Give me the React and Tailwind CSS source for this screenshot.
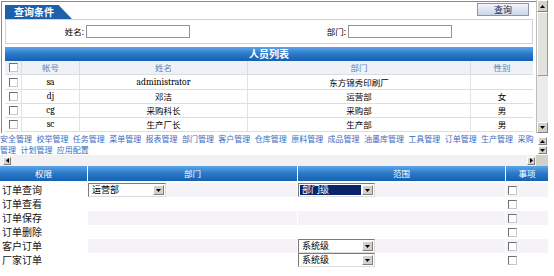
import React from "react";

function Tri({ dir = "down" }) {
  const horiz = dir === "left" || dir === "right";
  const w = horiz ? 3 : 5;
  const h = horiz ? 5 : 3;
  const pts = {
    down: "0,0 5,0 2.5,3",
    up: "0,3 5,3 2.5,0",
    left: "3,0 3,5 0,2.5",
    right: "0,0 0,5 3,2.5",
  }[dir];
  return (
    <svg width={w} height={h} viewBox={`0 0 ${w} ${h}`}>
      <polygon points={pts} fill="#000" />
    </svg>
  );
}

function Btn({ dir, className }) {
  return (
    <div
      className={`flex items-center justify-center bg-[#d4d0c8] border border-t-white border-l-white border-r-[#808080] border-b-[#808080] ${className}`}
    >
      <Tri dir={dir} />
    </div>
  );
}

function Check() {
  return (
    <div className="w-[9px] h-[9px] bg-white border border-t-[#6f6f6f] border-l-[#6f6f6f] border-r-[#c8c8c8] border-b-[#c8c8c8]" />
  );
}

function Select({ text, w, selected }) {
  return (
    <div
      className={`flex h-[14px] bg-white border border-t-[#7a7a7a] border-l-[#7a7a7a] border-r-[#dcdcdc] border-b-[#dcdcdc] ${w}`}
    >
      <div className="flex-1 p-[1px] flex">
        <div
          className={`flex-1 text-[9px] leading-[10px] pl-[2px] ${
            selected ? "bg-[#0a246a] text-white" : "text-black"
          }`}
        >
          {text}
        </div>
      </div>
      <Btn dir="down" className="w-[11px] h-[10px] my-[1px] mr-[1px]" />
    </div>
  );
}

const menu = [
  "安全管理",
  "校举管理",
  "任务管理",
  "菜单管理",
  "报表管理",
  "部门管理",
  "客户管理",
  "仓库管理",
  "原料管理",
  "成品管理",
  "油墨库管理",
  "工具管理",
  "订单管理",
  "生产管理",
  "采购管理",
  "计划管理",
  "应用配置",
];

const people = [
  ["sa", "administrator", "东方锦秀印刷厂", ""],
  ["dj", "邓洁", "运营部", "女"],
  ["cg", "采购科长", "采购部", "男"],
  ["sc", "生产厂长", "生产部", "男"],
];

const perms = [
  { name: "订单查询", dept: "运营部", scope: "部门级", sel: true },
  { name: "订单查看" },
  { name: "订单保存" },
  { name: "订单删除" },
  { name: "客户订单", scope: "系统级" },
  { name: "厂家订单", scope: "系统级" },
];

const isLatin = (s) => /^[\x00-\x7f]*$/.test(s);

export default function App() {
  return (
    <div className="w-[554px] h-[276px] bg-white overflow-hidden font-['Noto_Sans_CJK_SC','Noto_Sans',sans-serif] text-black">
      {/* top frame */}
      <div className="flex h-[133px]">
        <div className="mt-[1px] ml-[1px] w-[535px] h-[132px] border-l border-t border-[#8a8a8a] overflow-hidden">
          <div className="flex h-[17px] items-start">
            <div className="ml-[3px] mt-[3px] h-[14px] w-[67px] bg-[#1d5fa9] text-white font-bold text-[10px] leading-[14px] pl-[9px] [clip-path:polygon(0_0,80%_0,100%_100%,0_100%)]">
              查询条件
            </div>
            <div className="flex-1" />
            <div className="mt-[1px] mr-[7px] h-[13px] w-[52px] bg-gradient-to-b from-[#f2f5fb] to-[#c9d5e8] border border-[#8797b0] text-[9px] leading-[11px] text-center text-[#1c2f55]">
              查询
            </div>
          </div>
          <div className="ml-[3px] w-[528px] h-[25px] border border-[#c9d2dd] flex items-center text-[8.5px]">
            <div className="w-[78px] text-right">姓名:</div>
            <div className="ml-[2px] w-[104px] h-[13px] bg-white border border-[#8e959e]" />
            <div className="w-[156px] text-right">部门:</div>
            <div className="ml-[2px] w-[104px] h-[13px] bg-white border border-[#8e959e]" />
          </div>
          <div className="ml-[3px] mt-[3px] w-[528px] h-[14px] bg-gradient-to-b from-[#5aa5ea] via-[#2a78c8] to-[#1660b2] text-white font-bold text-[10px] leading-[14px] text-center">
            人员列表
          </div>
          <div className="ml-[3px] w-[528px] text-[8.5px]">
            <div className="flex h-[14px] bg-[#eef1f6] text-[#5a84c0] leading-[13px] border-b border-[#d8dde4]">
              <div className="w-[17px] flex items-center justify-center border-r border-[#d8dde4]">
                <Check />
              </div>
              <div className="w-[58px] text-center border-r border-[#d8dde4]">帐号</div>
              <div className="w-[168px] text-center border-r border-[#d8dde4]">姓名</div>
              <div className="w-[223px] text-center border-r border-[#d8dde4]">部门</div>
              <div className="w-[62px] text-center">性别</div>
            </div>
            {people.map((r, i) => (
              <div
                key={i}
                className={`flex ${i === 0 ? "h-[15px]" : "h-[14px]"} bg-white border-b border-[#dedede] items-center`}
              >
                <div className="w-[17px] h-full flex items-center justify-center border-r border-[#e2e2e2]">
                  <Check />
                </div>
                {r.map((c, j) => (
                  <div
                    key={j}
                    className={`h-full flex items-center justify-center ${
                      ["w-[58px]", "w-[168px]", "w-[223px]", "w-[62px]"][j]
                    } ${j < 3 ? "border-r border-[#e2e2e2]" : ""} ${
                      isLatin(c) ? "font-serif text-[9.5px]" : "text-[8.5px]"
                    }`}
                  >
                    {c}
                  </div>
                ))}
              </div>
            ))}
          </div>
        </div>
        <div className="w-[12px] h-[133px] bg-[#ebebeb] border-l border-[#bdbdbd] flex flex-col">
          <Btn dir="up" className="h-[12px] w-[11px]" />
          <div className="h-[64px] w-[11px] bg-[#e4e2dc] border border-t-white border-l-white border-r-[#9a9a9a] border-b-[#9a9a9a]" />
          <div className="flex-1" />
          <Btn dir="down" className="h-[11px] w-[11px]" />
        </div>
      </div>

      {/* menu links */}
      <div className="flex h-[22px]">
        <div className="w-[538px] h-[22px] overflow-hidden text-[8px] leading-[11px] text-[#3c6cc0] [word-spacing:2.6px]">
          {menu.join(" ")}
        </div>
        <div className="w-[9px] flex flex-col pt-[4px] gap-[1px]">
          <Btn dir="up" className="h-[8px] w-[9px]" />
          <Btn dir="down" className="h-[8px] w-[9px]" />
        </div>
      </div>
      <div className="flex h-[11px]">
        <div className="w-[536px] h-[11px] bg-[#f1f1f1] flex items-center justify-between pl-[3px] pr-[1px]">
          <Btn dir="left" className="w-[8px] h-[8px]" />
          <Btn dir="right" className="w-[8px] h-[8px]" />
        </div>
        <div className="w-[12px] h-[11px] bg-[#d4d0c8]" />
      </div>

      {/* permission table */}
      <div className="w-[548px]">
        <div className="flex h-[15px] gap-[1px] text-white text-[8.5px] leading-[15px] text-center">
          <div className="w-[87px] bg-gradient-to-b from-[#5aa5ea] via-[#2a78c8] to-[#1660b2]">权限</div>
          <div className="w-[209px] bg-gradient-to-b from-[#5aa5ea] via-[#2a78c8] to-[#1660b2]">部门</div>
          <div className="w-[207px] bg-gradient-to-b from-[#5aa5ea] via-[#2a78c8] to-[#1660b2]">范围</div>
          <div className="w-[42px] bg-gradient-to-b from-[#5aa5ea] via-[#2a78c8] to-[#1660b2]">事项</div>
        </div>
        <div className="mt-[2px] flex flex-col">
          {perms.map((p, i) => {
            const shade = i % 2 === 0 ? "bg-[#f5f3f8]" : "bg-white";
            return (
              <div key={i} className="flex h-[14px] gap-[1px] items-center">
                <div className="w-[87px] h-full bg-white text-[10px] leading-[14px] pl-[2px] text-[#111]">
                  {p.name}
                </div>
                <div className={`w-[209px] h-full ${shade}`}>
                  {p.dept && <Select text={p.dept} w="w-[78px]" />}
                </div>
                <div className={`w-[207px] h-full ${shade}`}>
                  {p.scope && <Select text={p.scope} w="w-[77px]" selected={p.sel} />}
                </div>
                <div className={`w-[42px] h-full ${shade} flex items-center pl-[2px]`}>
                  <Check />
                </div>
              </div>
            );
          })}
        </div>
      </div>
    </div>
  );
}
